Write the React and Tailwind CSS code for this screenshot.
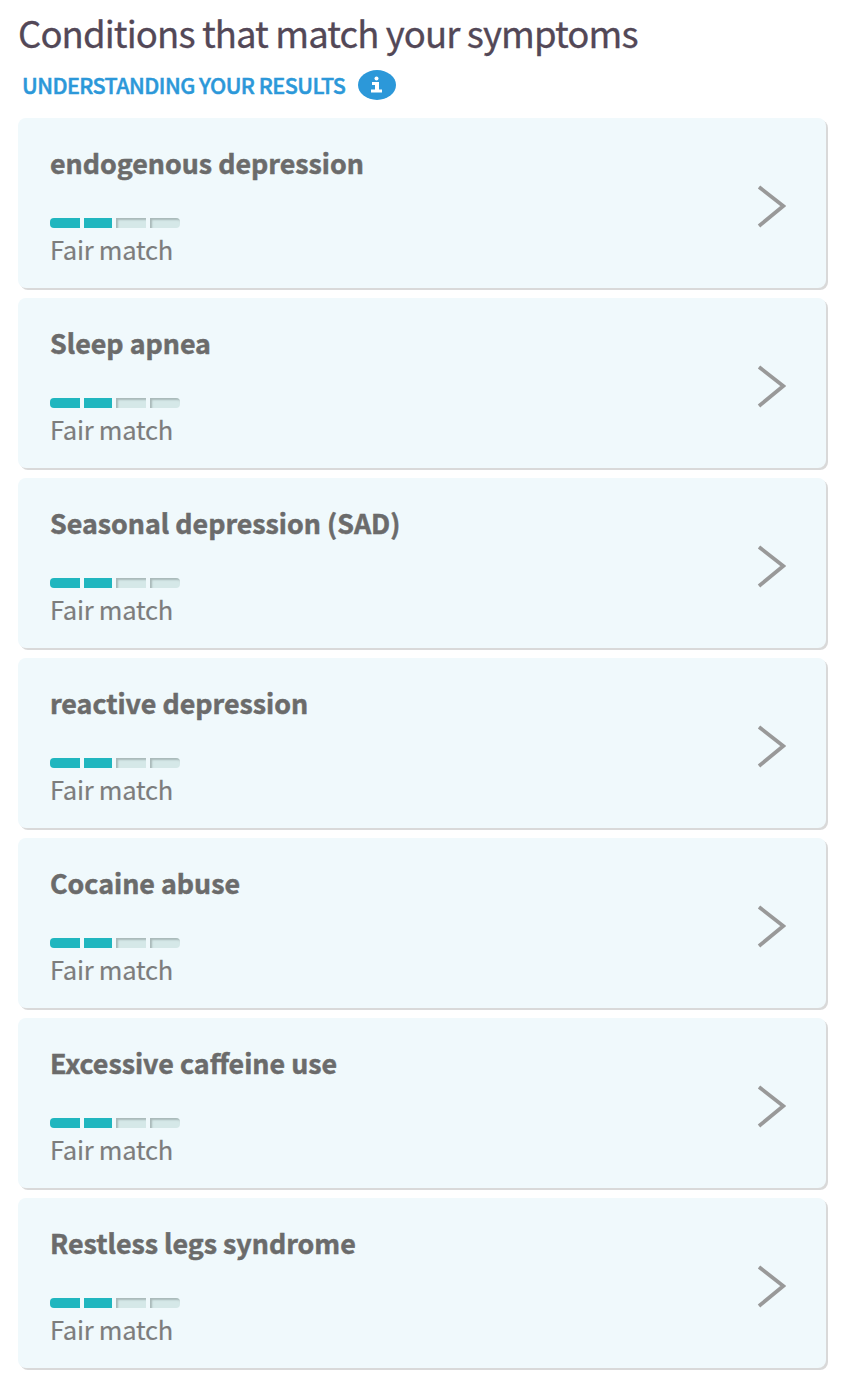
const conditions = [
  'endogenous depression',
  'Sleep apnea',
  'Seasonal depression (SAD)',
  'reactive depression',
  'Cocaine abuse',
  'Excessive caffeine use',
  'Restless legs syndrome',
];

function MatchBar() {
  return (
    <div className="mt-10 flex h-[10px] gap-1">
      <span className="w-[30px] rounded-l-[4px] bg-[#20b6bf]" />
      <span className="w-[28px] bg-[#20b6bf]" />
      <span className="w-[30px] bg-[#d5e8e8] shadow-[inset_2px_2px_2px_#a9b9b9]" />
      <span className="w-[30px] rounded-r-[4px] bg-[#d5e8e8] shadow-[inset_2px_2px_2px_#a9b9b9]" />
    </div>
  );
}

function ConditionCard({ name }) {
  return (
    <li className="flex h-[170px] w-[808px] items-start justify-between rounded-[8px] bg-[#f0f9fc] pl-8 pr-10 shadow-[2px_2px_0_#d9d9d9]">
      <div className="pt-[30px]">
        <h2 className="text-[26.8px] leading-[30px] font-bold whitespace-nowrap text-[#6b6b6b] [-webkit-text-stroke:0.5px_#6b6b6b]">{name}</h2>
        <MatchBar />
        <p className="mt-[6px] text-[25.5px] leading-[30px] tracking-[-0.25px] text-[#7d7d7d] [-webkit-text-stroke:0.2px_#7d7d7d]">Fair match</p>
      </div>
      <svg className="mt-[66px] h-[44px] w-[30px]" viewBox="0 0 30 44" fill="none" stroke="#999" strokeWidth="3.8">
        <path d="M3 3 L27.3 22 L3 42" />
      </svg>
    </li>
  );
}

export default function App() {
  return (
    <main className="min-h-[1388px] bg-white pt-[13px] pl-[18px] font-['Noto_Sans_CJK_SC','Open_Sans',sans-serif]">
      <h1 className="h-[57px] text-[36.5px] leading-[40px] tracking-[-0.9px] whitespace-nowrap text-[#534857] [-webkit-text-stroke:0.3px_#534857]">Conditions that match your symptoms</h1>
      <div className="flex h-[30px] items-center pl-1">
        <a className="w-[336px] text-[21.5px] leading-[30px] font-medium tracking-[-0.54px] whitespace-nowrap text-[#2c98d9] [-webkit-text-stroke:0.5px_#2c98d9]">UNDERSTANDING YOUR RESULTS</a>
        <svg className="h-[30px] w-[38px]" viewBox="0 0 38 30">
          <ellipse cx="19" cy="15" rx="19" ry="15" fill="#2c98d9" />
          <circle cx="18.5" cy="8.5" r="2" fill="#fff" />
          <path d="M14 12h7v7.5h3v3H13v-3h4V15h-3z" fill="#fff" />
        </svg>
      </div>
      <ul className="mt-[18px] flex flex-col gap-[10px]">
        {conditions.map((name) => (
          <ConditionCard key={name} name={name} />
        ))}
      </ul>
    </main>
  );
}
